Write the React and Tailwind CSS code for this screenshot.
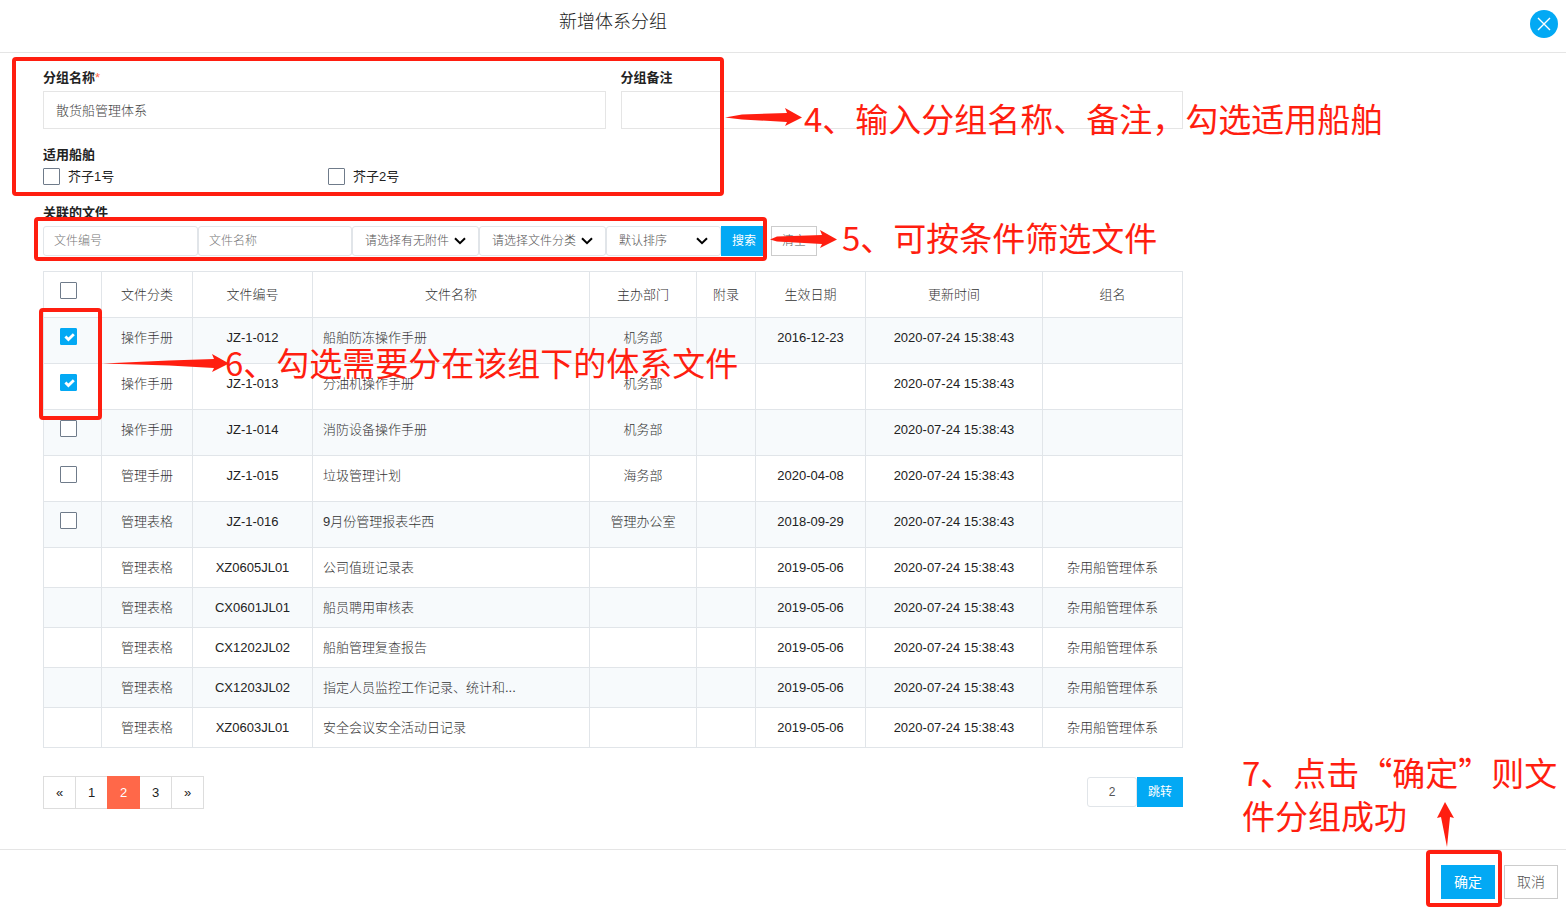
import { useState } from 'react';

const files = [
  { id: 1, type: '操作手册', code: 'JZ-1-012', name: '船舶防冻操作手册', dept: '机务部', date: '2016-12-23', selectable: true, selected: true },
  { id: 2, type: '操作手册', code: 'JZ-1-013', name: '分油机操作手册', dept: '机务部', date: '', selectable: true, selected: true },
  { id: 3, type: '操作手册', code: 'JZ-1-014', name: '消防设备操作手册', dept: '机务部', date: '', selectable: true },
  { id: 4, type: '管理手册', code: 'JZ-1-015', name: '垃圾管理计划', dept: '海务部', date: '2020-04-08', selectable: true },
  { id: 5, type: '管理表格', code: 'JZ-1-016', name: '9月份管理报表华西', dept: '管理办公室', date: '2018-09-29', selectable: true },
  { id: 6, type: '管理表格', code: 'XZ0605JL01', name: '公司值班记录表', date: '2019-05-06', group: '杂用船管理体系' },
  { id: 7, type: '管理表格', code: 'CX0601JL01', name: '船员聘用审核表', date: '2019-05-06', group: '杂用船管理体系' },
  { id: 8, type: '管理表格', code: 'CX1202JL02', name: '船舶管理复查报告', date: '2019-05-06', group: '杂用船管理体系' },
  { id: 9, type: '管理表格', code: 'CX1203JL02', name: '指定人员监控工作记录、统计和...', date: '2019-05-06', group: '杂用船管理体系' },
  { id: 10, type: '管理表格', code: 'XZ0603JL01', name: '安全会议安全活动日记录', date: '2019-05-06', group: '杂用船管理体系' },
];

const updatedAt = '2020-07-24 15:38:43';

function Checkbox(props) {
  return (
    <span className="relative block w-[17px] h-[17px] shrink-0">
      <input
        type="checkbox"
        className="peer block w-[17px] h-[17px] appearance-none border border-[#6f7b8a] rounded-[1px] bg-white checked:bg-[#03a9f4] checked:border-[#03a9f4]"
        {...props}
      />
      <svg
        viewBox="0 0 17 17"
        className="absolute inset-0 hidden peer-checked:block pointer-events-none"
      >
        <path d="M5.4 8.6l3 3 5.4-5.4" fill="none" stroke="#fff" strokeWidth="2.8" />
      </svg>
    </span>
  );
}

function FilterSelect({ label, className }) {
  return (
    <div className={`relative h-[30px] ${className}`}>
      <select
        aria-label={label}
        className="block w-full h-full pl-3 appearance-none border border-[#e1e5e9] rounded-[3px] bg-white text-xs text-[#555]"
      >
        <option>{label}</option>
      </select>
      <svg
        viewBox="0 0 12 8"
        className="absolute right-[13px] top-[11px] w-3 h-2 pointer-events-none"
      >
        <path d="M1 1.2l5 5 5-5" fill="none" stroke="#000" strokeWidth="2" />
      </svg>
    </div>
  );
}

function Arrow({ length, className }) {
  const points = `0,9.5 ${length - 60},6.5 ${length - 15},5 ${length - 17},0 ${length},9.5 ${length - 17},18 ${length - 15},14 ${length - 60},11.5`;

  return (
    <svg width={length} height="18" className={`absolute ${className}`}>
      <polygon points={points} fill="#ff1e10" />
    </svg>
  );
}

function Frame({ className }) {
  return (
    <div className={`absolute border-4 border-[#ff1e10] rounded-[4px] ${className}`} />
  );
}

function Note({ className, children }) {
  return (
    <p
      className={`absolute text-[33px] leading-[43px] text-[#ff1e10] font-['Noto_Sans_CJK_SC',sans-serif] ${className}`}
    >
      {children}
    </p>
  );
}

export default function App() {
  const [rows, setRows] = useState(files);

  const toggle = (id) =>
    setRows(rows.map((r) => (r.id === id ? { ...r, selected: !r.selected } : r)));

  const th = 'border border-[#e1e5e9] font-light text-[#333] text-center';
  const td = 'border border-[#e1e5e9] pt-[10px] align-top text-center';
  const pageItem =
    'flex items-center justify-center w-[33px] h-[33px] -ml-px border border-[#ddd] text-[#222]';

  return (
    <div className="relative overflow-hidden bg-white text-[13px] leading-5 text-[#222] font-['Liberation_Sans','Noto_Sans_CJK_SC',sans-serif]">
      <header className="relative h-[53px] px-[43px] border-b border-[#e5e5e5]">
        <h1 className="max-w-[1140px] pt-[9px] text-center text-lg leading-[26px] font-light text-[#222]">
          新增体系分组
        </h1>
        <button
          aria-label="关闭"
          className="absolute right-2 top-[10px] flex items-center justify-center w-7 h-7 rounded-full bg-[#03a9f4]"
        >
          <svg viewBox="0 0 14 14" className="w-[14px] h-[14px]">
            <path d="M1 1l12 12M13 1L1 13" stroke="#fff" strokeWidth="1.4" />
          </svg>
        </button>
      </header>

      <main className="px-[43px] pt-[15px] pb-10">
        <div className="max-w-[1140px]">
          <div className="grid grid-cols-2 gap-[15px]">
            <div>
              <label htmlFor="groupName" className="block mb-[3px] font-bold">
                分组名称<span className="font-normal text-[#ff6849]">*</span>
              </label>
              <input
                id="groupName"
                defaultValue="散货船管理体系"
                className="block w-full h-[38px] px-3 pb-[2px] border border-[#e5e5e5] font-light text-[#444]"
              />
            </div>
            <div>
              <label htmlFor="groupRemark" className="block mb-[3px] font-bold">
                分组备注
              </label>
              <input
                id="groupRemark"
                className="block w-full h-[38px] px-3 pb-[2px] border border-[#e5e5e5] font-light text-[#444]"
              />
            </div>
          </div>

          <fieldset className="mt-4">
            <legend className="font-bold">适用船舶</legend>
            <div className="grid grid-cols-4 mt-[3px]">
              <label className="flex gap-2">
                <Checkbox />
                <span className="-mt-px">芥子1号</span>
              </label>
              <label className="flex gap-2">
                <Checkbox />
                <span className="-mt-px">芥子2号</span>
              </label>
            </div>
          </fieldset>

          <h2 className="mt-4 font-bold">关联的文件</h2>
          <div className="flex mt-[3px] text-xs font-light">
            <input
              aria-label="文件编号"
              placeholder="文件编号"
              className="w-[155px] h-[30px] px-[10px] border border-[#e1e5e9] rounded-[3px] placeholder:text-[#777]"
            />
            <input
              aria-label="文件名称"
              placeholder="文件名称"
              className="w-[154px] h-[30px] px-[10px] border border-[#e1e5e9] rounded-[3px] placeholder:text-[#777]"
            />
            <FilterSelect label="请选择有无附件" className="w-[127px]" />
            <FilterSelect label="请选择文件分类" className="w-[127px]" />
            <FilterSelect label="默认排序" className="w-[115px]" />
            <button className="w-[46px] h-[30px] bg-[#03a9f4] font-normal text-white">搜索</button>
            <button className="w-[46px] h-[30px] ml-1 border border-[#ccc] text-[#555]">清空</button>
          </div>

          <table className="w-full mt-[15px] table-fixed border-collapse">
            <colgroup>
              <col className="w-[58px]" />
              <col className="w-[91px]" />
              <col className="w-[120px]" />
              <col />
              <col className="w-[107px]" />
              <col className="w-[59px]" />
              <col className="w-[110px]" />
              <col className="w-[177px]" />
              <col className="w-[140px]" />
            </colgroup>
            <thead>
              <tr className="h-[46px]">
                <th className={`${th} align-top pt-[10px] pl-4`}>
                  <Checkbox aria-label="全选" />
                </th>
                <th className={th}>文件分类</th>
                <th className={th}>文件编号</th>
                <th className={th}>文件名称</th>
                <th className={th}>主办部门</th>
                <th className={th}>附录</th>
                <th className={th}>生效日期</th>
                <th className={th}>更新时间</th>
                <th className={th}>组名</th>
              </tr>
            </thead>
            <tbody className="font-light text-[#333]">
              {rows.map((row) => (
                <tr
                  key={row.id}
                  className={`odd:bg-[#f7fafc] ${row.selectable ? 'h-[46px]' : 'h-10'}`}
                >
                  <td className={`${td} pl-4`}>
                    {row.selectable && (
                      <Checkbox
                        aria-label={row.name}
                        checked={!!row.selected}
                        onChange={() => toggle(row.id)}
                      />
                    )}
                  </td>
                  <td className={td}>{row.type}</td>
                  <td className={`${td} font-normal text-[#222]`}>{row.code}</td>
                  <td className="border border-[#e1e5e9] pt-[10px] pl-[10px] align-top">
                    {row.name}
                  </td>
                  <td className={td}>{row.dept}</td>
                  <td className={td} />
                  <td className={`${td} font-normal text-[#222]`}>{row.date}</td>
                  <td className={`${td} font-normal text-[#222]`}>{updatedAt}</td>
                  <td className={td}>{row.group}</td>
                </tr>
              ))}
            </tbody>
          </table>

          <div className="flex items-start justify-between mt-7">
            <nav className="flex pl-px" aria-label="分页">
              <a href="#prev" className={pageItem}>«</a>
              <a href="#1" className={pageItem}>1</a>
              <a
                href="#2"
                className="flex items-center justify-center w-[33px] h-[33px] -ml-px bg-[#ff6849] text-white z-10"
              >
                2
              </a>
              <a href="#3" className={pageItem}>3</a>
              <a href="#next" className={pageItem}>»</a>
            </nav>
            <div className="flex mt-px text-xs">
              <input
                aria-label="页码"
                defaultValue="2"
                className="w-[50px] h-[30px] border border-[#e1e5e9] rounded-[3px] text-center text-[#555]"
              />
              <button className="w-[46px] h-[30px] bg-[#03a9f4] text-white">跳转</button>
            </div>
          </div>
        </div>
      </main>

      <footer className="relative flex justify-end gap-[9px] pt-[15px] pr-2 pb-[9px] border-t border-[#e5e5e5] text-sm">
        <button className="w-[54px] h-[34px] bg-[#03a9f4] text-white">确定</button>
        <button className="w-[54px] h-[34px] border border-[#ccc] font-light text-[#555]">取消</button>

        <div className="absolute inset-0 pointer-events-none">
          <Frame className="right-16 top-0 w-[76px] h-[57px]" />
          <svg
            width="18"
            height="45"
            className="absolute right-[111px] -top-12"
          >
            <polygon points="8,0 17,16 13,15 10,45 4,15 0,16" fill="#ff1e10" />
          </svg>
          <Note className="right-0 -top-[99px] w-[324px]">7、点击“确定”则文件分组成功</Note>
        </div>
      </footer>

      <div className="absolute inset-0 pointer-events-none">
        <Frame className="left-3 top-[57px] w-[712px] h-[139px]" />
        <Arrow length={77} className="left-[725px] top-[108px]" />
        <Note className="left-[804px] top-[97px]">4、输入分组名称、备注，勾选适用船舶</Note>

        <Frame className="left-[34px] top-[217px] w-[733px] h-[44px]" />
        <Arrow length={67} className="left-[770px] top-[230px]" />
        <Note className="left-[842px] top-[216px]">5、可按条件筛选文件</Note>

        <Frame className="left-[39px] top-[308px] w-[63px] h-[112px]" />
        <Arrow length={126} className="left-[103px] top-[354px]" />
        <Note className="left-[225px] top-[341px]">6、勾选需要分在该组下的体系文件</Note>
      </div>
    </div>
  );
}
